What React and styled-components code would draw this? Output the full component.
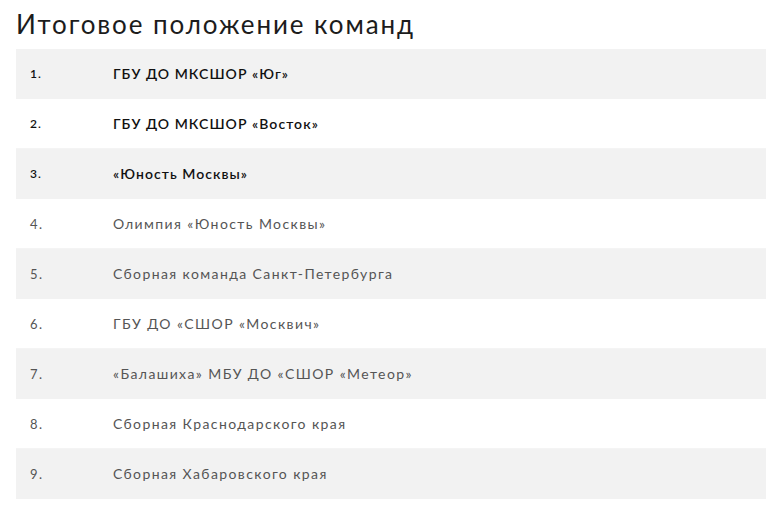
import React from 'react'
import styled, { createGlobalStyle } from 'styled-components'

const GlobalStyle = createGlobalStyle`
    html, body {
        margin: 0;
        padding: 0;
        background: #fff;
    }
    body {
        font-family: Lato, "Open Sans", "Liberation Sans", sans-serif;
    }
`

const Page = styled.div`
    padding: 9px 17px 0 16px;
`

const Title = styled.h2`
    margin: 0 0 10px 0;
    font-size: 26px;
    font-weight: 400;
    letter-spacing: 1.9px;
    color: #1c1c1c;
    line-height: 30px;
`

const Table = styled.div`
    display: flex;
    flex-direction: column;
`

const Row = styled.div`
    display: grid;
    grid-template-columns: 83px 1fr;
    align-items: center;
    height: 50px;
    box-sizing: border-box;
    padding-left: 14px;
    background: ${p => (p.$shaded ? '#f2f2f2' : '#fff')};
    border-bottom: 1px solid ${p => (p.$shaded ? '#f2f2f2' : '#f4f4f4')};
    color: ${p => (p.$top ? '#111' : '#555')};
    font-weight: ${p => (p.$top ? 600 : 400)};
    font-size: 14px;
    letter-spacing: ${p => (p.$top ? '1.05px' : '1.4px')};
`

const Place = styled.span`
    font-size: ${p => (p.$top ? '12px' : '13px')};
`

const Name = styled.span``

const teams = [
    'ГБУ ДО МКСШОР «Юг»',
    'ГБУ ДО МКСШОР «Восток»',
    '«Юность Москвы»',
    'Олимпия «Юность Москвы»',
    'Сборная команда Санкт-Петербурга',
    'ГБУ ДО «СШОР «Москвич»',
    '«Балашиха» МБУ ДО «СШОР «Метеор»',
    'Сборная Краснодарского края',
    'Сборная Хабаровского края',
]

const App = () => {
    return (
        <Page>
            <GlobalStyle />
            <Title>Итоговое положение команд</Title>
            <Table>
                {teams.map((team, i) => (
                    <Row key={i} $shaded={i % 2 === 0} $top={i < 3}>
                        <Place $top={i < 3}>{i + 1}.</Place>
                        <Name>{team}</Name>
                    </Row>
                ))}
            </Table>
        </Page>
    )
}

export default App
